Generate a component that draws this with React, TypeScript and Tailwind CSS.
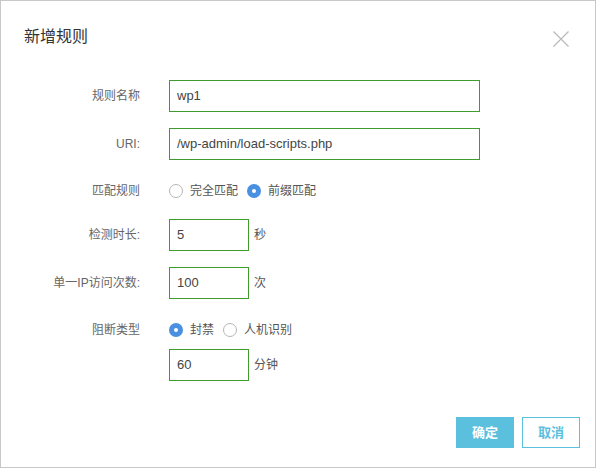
const font = { fontFamily: '"Helvetica Neue", "Liberation Sans", "Noto Sans CJK SC", sans-serif' };

function Radio({ checked, label }: { checked?: boolean; label: string }) {
    return (
        <label className="flex items-center gap-[7px]">
            {checked ? (
                <span className="w-[14px] h-[14px] rounded-full bg-[#4a90e2] flex items-center justify-center">
                    <span className="w-[4px] h-[4px] rounded-full bg-white"></span>
                </span>
            ) : (
                <span className="w-[14px] h-[14px] rounded-full border border-[#b5b5b5] bg-white"></span>
            )}
            <span className="text-[12px] text-[#555]">{label}</span>
        </label>
    );
}

function Row({ label, className, children }: { label: string; className?: string; children: React.ReactNode }) {
    return (
        <div className={"flex items-center " + (className ?? "")}>
            <div className="w-[139px] text-right text-[12px] text-[#666] shrink-0">{label}</div>
            <div className="ml-[29px] flex items-center">{children}</div>
        </div>
    );
}

function Input({ value, wide }: { value: string; wide?: boolean }) {
    return (
        <div
            className={
                "h-[32px] border border-[#3f9b2b] flex items-center px-[7px] text-[13px] text-[#444] " +
                (wide ? "w-[311px]" : "w-[80px]")
            }
        >
            {value}
        </div>
    );
}

export default function App() {
    return (
        <div style={font} className="w-[596px] h-[468px] bg-white border border-[#c8c8c8] flex flex-col">
            <div className="flex items-start justify-between pl-[23px] pr-[26px] pt-[26px]">
                <h2 className="text-[16px] text-[#333] leading-[20px]">新增规则</h2>
                <svg width="16" height="16" viewBox="0 0 16 16" className="mt-[4px]" stroke="#b9b9b9" strokeWidth="1.2" fill="none">
                    <path d="M0.5 0.5 L15.5 15.5 M15.5 0.5 L0.5 15.5" />
                </svg>
            </div>

            <div className="mt-[33px]">
                <Row label="规则名称">
                    <Input value="wp1" wide />
                </Row>
                <Row label="URI:" className="mt-[16px]">
                    <Input value="/wp-admin/load-scripts.php" wide />
                </Row>
                <Row label="匹配规则" className="mt-[16px] h-[30px]">
                    <div className="flex items-center gap-[9px]">
                        <Radio label="完全匹配" />
                        <Radio checked label="前缀匹配" />
                    </div>
                </Row>
                <Row label="检测时长:" className="mt-[13px]">
                    <Input value="5" />
                    <span className="ml-[5px] text-[12px] text-[#555]">秒</span>
                </Row>
                <Row label="单一IP访问次数:" className="mt-[16px]">
                    <Input value="100" />
                    <span className="ml-[5px] text-[12px] text-[#555]">次</span>
                </Row>
                <Row label="阻断类型" className="mt-[16px] h-[30px]">
                    <div className="flex items-center gap-[9px]">
                        <Radio checked label="封禁" />
                        <Radio label="人机识别" />
                    </div>
                </Row>
                <Row label="" className="mt-[4px]">
                    <Input value="60" />
                    <span className="ml-[5px] text-[12px] text-[#555]">分钟</span>
                </Row>
            </div>

            <div className="mt-auto mb-[19px] mr-[15px] flex justify-end gap-[8px]">
                <button className="w-[58px] h-[31px] bg-[#5bc0de] text-white text-[13px] font-bold">确定</button>
                <button className="w-[58px] h-[31px] border border-[#5bc0de] text-[#5bc0de] text-[13px] font-bold bg-white">
                    取消
                </button>
            </div>
        </div>
    );
}
